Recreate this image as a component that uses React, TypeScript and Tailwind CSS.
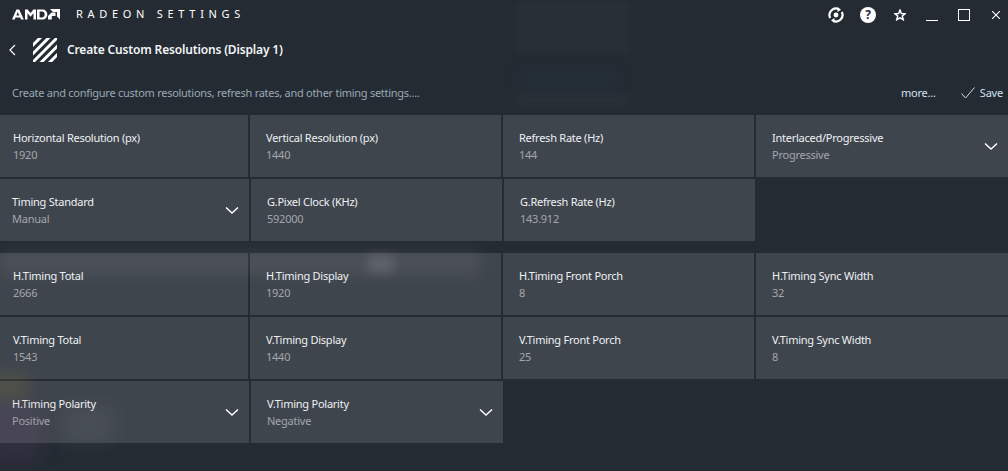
import React from "react";

const Chevron = () => (
  <svg width="14" height="9" viewBox="0 0 14 9" className="shrink-0" fill="none">
    <path d="M1 1.5 L7 7 L13 1.5" stroke="#ffffff" strokeWidth="1.5" />
  </svg>
);

type C = { t: string; v: string; w: string; dd?: boolean };

const Card = ({ t, v, w, dd }: C) => (
  <div className={`${w} h-[62px] bg-[#3f454d] flex items-center justify-between pl-4 pr-[10px]`}>
    <div className="flex flex-col">
      <span className="text-[11px] tracking-[-0.25px] leading-[17px] text-[#eef1f4]">{t}</span>
      <span className="text-[11px] tracking-[-0.25px] leading-[17px] text-[#a3a7ab]">{v}</span>
    </div>
    {dd && <Chevron />}
  </div>
);

const Row = ({ items, shift, mb }: { items: C[]; shift?: boolean; mb?: string }) => (
  <div className={`flex gap-[2px] ${shift ? "-ml-[4px]" : "-ml-[3px]"} ${mb ?? "mb-[2px]"}`}>
    {items.map((c) => (
      <Card key={c.t} {...c} />
    ))}
  </div>
);

const A = ["w-[251px]", "w-[251px]", "w-[251px]", "w-[252px]"];
const B = ["w-[253px]", "w-[251px]", "w-[251px]"];

export default function App() {
  return (
    <div
      className="relative w-[1008px] h-[471px] overflow-hidden bg-[#242b33] text-white"
      style={{ fontFamily: '"Noto Sans", sans-serif' }}
    >
      <div className="relative flex flex-col">
        {/* title bar */}
        <div className="h-[29px] flex items-center justify-between">
          <div className="flex items-center pl-3">
            <svg width="48" height="11" viewBox="0 0 48 11" fill="#ffffff">
              <path d="M0 10.5 L4.4 0.5 L7.2 0.5 L11.8 10.5 L9 10.5 L8.2 8.6 L3.5 8.6 L2.7 10.5 Z M4.4 6.5 L7.3 6.5 L5.8 3 Z" />
              <path d="M13 10.5 L13 0.5 L15.6 0.5 L18.5 4 L21.4 0.5 L24 0.5 L24 10.5 L21.5 10.5 L21.5 4.2 L18.5 7.8 L15.5 4.2 L15.5 10.5 Z" />
              <path d="M25 0.5 L30 0.5 C33.5 0.5 35.3 2.6 35.3 5.5 C35.3 8.4 33.5 10.5 30 10.5 L25 10.5 Z M27.6 2.6 L27.6 8.4 L29.8 8.4 C31.7 8.4 32.6 7.2 32.6 5.5 C32.6 3.8 31.7 2.6 29.8 2.6 Z" />
              <path d="M38 0 L48 0 L48 10.5 L45 7.5 L45 3 L41 3 Z" />
              <path d="M36 7 L39.5 3.5 L43.5 3.5 L43.5 7 L39.8 7 L39.8 10.5 L36 10.5 Z" />
            </svg>
            <span className="ml-4 text-[11px] tracking-[4.7px] text-white">RADEON SETTINGS</span>
          </div>
          <div className="flex items-center h-full">
            <svg width="16" height="16" viewBox="0 0 16 16" fill="none" stroke="#fff" className="mr-4">
              <path d="M2.2 11 A6.5 6.5 0 0 1 10.8 2.2" strokeWidth="2.2" />
              <path d="M13.8 5 A6.5 6.5 0 0 1 5.2 13.8" strokeWidth="2.2" />
              <circle cx="8" cy="8" r="2.4" fill="#fff" stroke="none" />
              <path d="M9.5 0 L13 2.8 L9.5 5 Z M6.5 16 L3 13.2 L6.5 11 Z" fill="#fff" stroke="none" />
            </svg>
            <div className="w-4 h-4 rounded-full bg-white flex items-center justify-center text-[#242b33] text-[12px] font-bold leading-none mr-[18px]">?</div>
            <svg width="12" height="12" viewBox="0 0 13 13" fill="none" stroke="#fff" strokeWidth="1.6" className="mr-5">
              <path d="M6.5 1.2 L8 4.8 L12 5.1 L9 7.6 L10 11.6 L6.5 9.5 L3 11.6 L4 7.6 L1 5.1 L5 4.8 Z" />
            </svg>
            <div className="w-3 h-px bg-white mt-[11px] mr-5" />
            <div className="w-3 h-3 border border-white mr-[22px]" />
            <svg width="8" height="8" viewBox="0 0 8 8" stroke="#fff" strokeWidth="1.1" className="mr-2">
              <path d="M0 0 L8 8 M8 0 L0 8" />
            </svg>
          </div>
        </div>

        {/* heading */}
        <div className="h-[42px] flex items-center">
          <svg width="7" height="12" viewBox="0 0 7 12" fill="none" stroke="#fff" strokeWidth="1.2" className="ml-[9px]">
            <path d="M6 1 L1 6 L6 11" />
          </svg>
          <svg width="24" height="24" viewBox="0 0 24 24" stroke="#fff" strokeWidth="3" className="ml-[17px]">
            <path d="M-1 8 L8 -1 M-1 16.5 L16.5 -1 M-1 25 L25 -1 M7.5 25 L25 7.5 M16 25 L25 16" />
          </svg>
          <span className="ml-[10px] text-[12px] tracking-[-0.16px] font-semibold text-[#f2f4f6]">Create Custom Resolutions (Display 1)</span>
        </div>

        {/* description */}
        <div className="h-[44px] flex items-center justify-between pl-3">
          <span className="text-[11px] tracking-[-0.27px] text-[#9aa8b5]">Create and configure custom resolutions, refresh rates, and other timing settings....</span>
          <div className="flex items-center">
            <span className="text-[11px] tracking-[-0.2px] text-[#cfe0ee]">more...</span>
            <svg width="14" height="12" viewBox="0 0 14 12" fill="none" stroke="#d5dade" strokeWidth="1" className="ml-[25px]">
              <path d="M0.5 6.5 L4.5 11 L13.5 0.5" />
            </svg>
            <span className="ml-[5px] mr-[5px] text-[11px] tracking-[-0.2px] text-[#cfe0ee]">Save</span>
          </div>
        </div>

        <Row
          items={[
            { t: "Horizontal Resolution (px)", v: "1920", w: A[0] },
            { t: "Vertical Resolution (px)", v: "1440", w: A[1] },
            { t: "Refresh Rate (Hz)", v: "144", w: A[2] },
            { t: "Interlaced/Progressive", v: "Progressive", w: A[3], dd: true },
          ]}
        />
        <Row
          shift
          mb="mb-[12px]"
          items={[
            { t: "Timing Standard", v: "Manual", w: B[0], dd: true },
            { t: "G.Pixel Clock (KHz)", v: "592000", w: B[1] },
            { t: "G.Refresh Rate (Hz)", v: "143.912", w: B[2] },
          ]}
        />
        <Row
          items={[
            { t: "H.Timing Total", v: "2666", w: A[0] },
            { t: "H.Timing Display", v: "1920", w: A[1] },
            { t: "H.Timing Front Porch", v: "8", w: A[2] },
            { t: "H.Timing Sync Width", v: "32", w: A[3] },
          ]}
        />
        <Row
          items={[
            { t: "V.Timing Total", v: "1543", w: A[0] },
            { t: "V.Timing Display", v: "1440", w: A[1] },
            { t: "V.Timing Front Porch", v: "25", w: A[2] },
            { t: "V.Timing Sync Width", v: "8", w: A[3] },
          ]}
        />
        <Row
          shift
          items={[
            { t: "H.Timing Polarity", v: "Positive", w: B[0], dd: true },
            { t: "V.Timing Polarity", v: "Negative", w: "w-[252px]", dd: true },
          ]}
        />
      </div>

      {/* blurred wallpaper showing through the translucent panel */}
      <div className="absolute left-[515px] top-0 w-[115px] h-[55px] bg-white/[0.02] blur-[5px] pointer-events-none" />
      <div className="absolute left-[520px] top-[70px] w-[100px] h-[18px] bg-[#2a5060]/10 blur-[5px] pointer-events-none" />
      <div className="absolute left-[515px] top-[92px] w-[115px] h-[16px] bg-white/[0.02] blur-[5px] pointer-events-none" />
      <div className="absolute left-0 top-[250px] w-[480px] h-[24px] bg-white/[0.07] blur-[8px] pointer-events-none" />
      <div className="absolute left-[368px] top-[254px] w-[26px] h-[20px] bg-white/[0.10] blur-[5px] pointer-events-none" />
      <div className="absolute -left-[10px] top-[374px] w-[38px] h-[24px] bg-[#b5a030]/15 blur-[8px] pointer-events-none" />
      <div className="absolute -left-[10px] top-[402px] w-[50px] h-[60px] bg-[#8a50a0]/12 blur-[9px] pointer-events-none" />
      <div className="absolute left-[62px] top-[405px] w-[52px] h-[40px] bg-white/[0.05] blur-[9px] pointer-events-none" />
    </div>
  );
}
